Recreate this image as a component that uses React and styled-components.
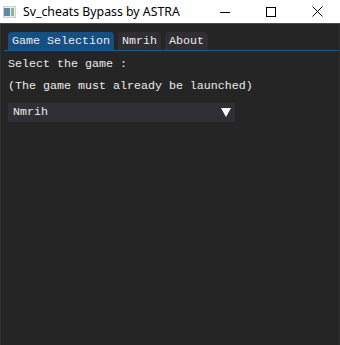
import React from "react";
import styled, { createGlobalStyle } from "styled-components";

const GlobalStyle = createGlobalStyle`
  html, body {
    margin: 0;
    padding: 0;
    background: #252525;
  }
`;

const Window = styled.div`
  width: 340px;
  height: 345px;
  display: flex;
  flex-direction: column;
  background: #252525;
  overflow: hidden;
`;

const TitleBar = styled.div`
  height: 23px;
  background: #ffffff;
  display: flex;
  align-items: center;
  border-bottom: 1px solid #4a4a4a;
  flex-shrink: 0;
`;

const AppIcon = styled.svg`
  margin-left: 3px;
  width: 13px;
  height: 12px;
`;

const Title = styled.span`
  margin-left: 7px;
  font-family: "Segoe UI", "Noto Sans", "Liberation Sans", sans-serif;
  font-size: 12.3px;
  color: #000;
  flex: 1;
`;

const Controls = styled.div`
  display: flex;
  height: 100%;
`;

const ControlButton = styled.div`
  width: 46px;
  height: 100%;
  display: flex;
  align-items: center;
  justify-content: center;
`;

const Body = styled.div`
  flex: 1;
  display: flex;
  flex-direction: column;
  border-left: 1px solid #2f2f2f;
  border-right: 1px solid #2f2f2f;
  font-family: "Liberation Mono", "DejaVu Sans Mono", monospace;
  font-size: 11.67px;
  color: #ececec;
`;

const TabBar = styled.div`
  display: flex;
  gap: 4px;
  padding: 8px 0 0 4px;
  margin-left: 3px;
  border-bottom: 1px solid #1d5b8f;
`;

const Tab = styled.div`
  height: 18px;
  line-height: 18px;
  padding: 0 4px;
  border-radius: 4px 4px 0 0;
  background: ${(p) => (p.$active ? "#165083" : "#2e2e33")};
  white-space: pre;
`;

const Content = styled.div`
  padding: 7px 8px 0 7px;
  display: flex;
  flex-direction: column;
`;

const Line = styled.div`
  line-height: 13px;
  white-space: pre;
  margin-bottom: 9px;
`;

const Combo = styled.div`
  width: 227px;
  height: 19px;
  line-height: 19px;
  margin-top: 1px;
  background: #2f2f36;
  display: flex;
  align-items: center;
  justify-content: space-between;
  padding: 0 4px 0 5px;
  box-sizing: border-box;
`;

const ComboText = styled.span`
  white-space: pre;
`;

const Arrow = styled.svg`
  width: 10px;
  height: 9px;
`;

export default function App() {
  return (
    <Window>
      <GlobalStyle />
      <TitleBar>
        <AppIcon viewBox="0 0 13 12">
          <rect x="0" y="0" width="13" height="12" fill="#c9d3dc" />
          <rect x="1" y="1" width="11" height="10" fill="#e8eef3" />
          <rect x="1" y="2" width="6" height="8" fill="#5d88a8" />
          <rect x="8" y="2" width="3" height="8" fill="#8fb48c" />
        </AppIcon>
        <Title>Sv_cheats Bypass by ASTRA</Title>
        <Controls>
          <ControlButton>
            <svg width="10" height="10" viewBox="0 0 10 10">
              <line x1="0" y1="5.5" x2="10" y2="5.5" stroke="#000" strokeWidth="1" />
            </svg>
          </ControlButton>
          <ControlButton>
            <svg width="10" height="10" viewBox="0 0 10 10">
              <rect x="0.5" y="0.5" width="9" height="9" fill="none" stroke="#000" strokeWidth="1" />
            </svg>
          </ControlButton>
          <ControlButton>
            <svg width="11" height="11" viewBox="0 0 11 11">
              <path d="M0.5 0.5 L10.5 10.5 M10.5 0.5 L0.5 10.5" stroke="#000" strokeWidth="1" />
            </svg>
          </ControlButton>
        </Controls>
      </TitleBar>
      <Body>
        <TabBar>
          <Tab $active>Game Selection</Tab>
          <Tab>Nmrih</Tab>
          <Tab>About</Tab>
        </TabBar>
        <Content>
          <Line>Select the game :</Line>
          <Line>(The game must already be launched)</Line>
          <Combo>
            <ComboText>Nmrih</ComboText>
            <Arrow viewBox="0 0 10 9">
              <polygon points="0,0 10,0 5,9" fill="#ffffff" />
            </Arrow>
          </Combo>
        </Content>
      </Body>
    </Window>
  );
}
